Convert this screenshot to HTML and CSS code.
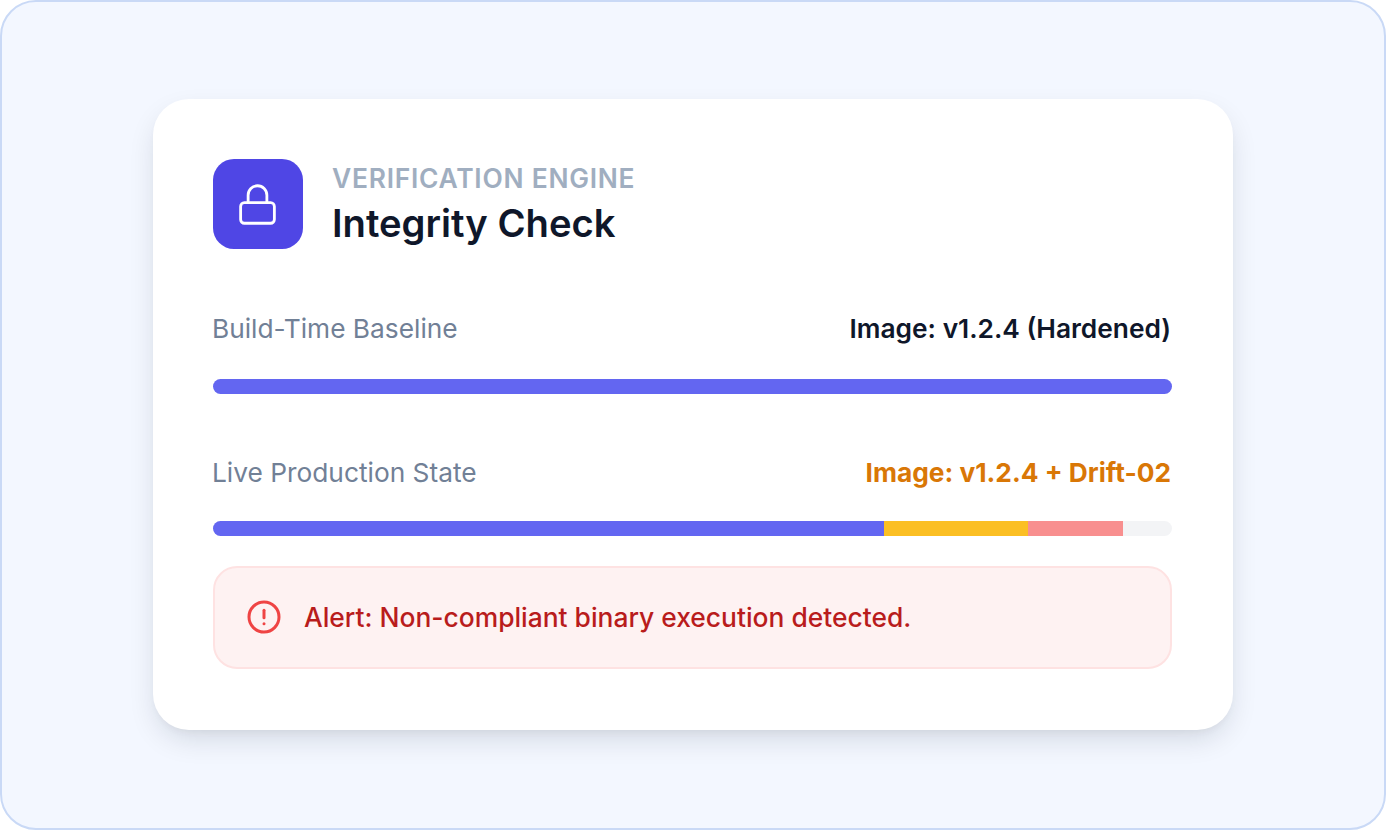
FILE: index.html
```html
<!DOCTYPE html>
<html lang="en">
<head>
<meta charset="utf-8">
<title>Integrity Check</title>
<link rel="stylesheet" href="styles.css">
</head>
<body>
<main class="frame">
  <section class="card">
    <header class="head">
      <div class="tile">
        <svg class="lock" viewBox="0 0 24 24" fill="none" stroke="#fff" stroke-width="1.5" stroke-linecap="round" stroke-linejoin="round">
          <rect x="3" y="11" width="18" height="11" rx="2"/>
          <path d="M7 11V7a5 5 0 0 1 10 0v4"/>
        </svg>
      </div>
      <div class="titles">
        <div class="eyebrow">VERIFICATION ENGINE</div>
        <h1 class="title">Integrity Check</h1>
      </div>
    </header>
    <div class="row row-first">
      <span class="label">Build-Time Baseline</span>
      <span class="value">Image: v1.2.4 (Hardened)</span>
    </div>
    <div class="bar bar-first"><div class="seg seg-indigo" style="width:100%"></div></div>
    <div class="row row-second">
      <span class="label">Live Production State</span>
      <span class="value value-warn">Image: v1.2.4 + Drift-02</span>
    </div>
    <div class="bar bar-second">
      <div class="seg seg-indigo" style="width:70%"></div>
      <div class="seg seg-amber" style="width:15%"></div>
      <div class="seg seg-red" style="width:9.9%"></div>
    </div>
    <div class="alert">
      <svg class="alert-icon" viewBox="0 0 24 24" fill="none" stroke="#ef4444" stroke-width="2" stroke-linecap="round" stroke-linejoin="round">
        <circle cx="12" cy="12" r="10"/>
        <path d="M12 7.5v5"/>
        <path d="M12 16.5h.01"/>
      </svg>
      <span class="alert-text">Alert: Non-compliant binary execution detected.</span>
    </div>
  </section>
</main>
</body>
</html>
```
FILE: styles.css
```css
* { box-sizing: border-box; }
html, body { margin: 0; padding: 0; }
body {
  width: 1386px;
  height: 830px;
  overflow: hidden;
  background: #fff;
  font-family: Inter, "Liberation Sans", sans-serif;
}
.frame {
  width: 1386px;
  height: 830px;
  display: flex;
  align-items: center;
  justify-content: center;
  background: #f3f7ff;
  border: 2px solid #c9d9f6;
  border-radius: 36px;
}
.card {
  width: 1080px;
  height: 631px;
  margin-top: -2px;
  padding: 60px 61px 0 60px;
  background: #fff;
  border-radius: 36px;
  box-shadow: 0 12px 30px -6px rgba(15, 23, 42, 0.16), 0 4px 10px -4px rgba(15, 23, 42, 0.06);
}
.head {
  display: flex;
  align-items: center;
  gap: 29px;
}
.tile {
  width: 90px;
  height: 90px;
  flex: none;
  display: flex;
  align-items: center;
  justify-content: center;
  background: #4f46e5;
  border-radius: 21px;
}
.lock { width: 45px; height: 45px; margin: 2px 0 0 -2px; }
.titles { display: flex; flex-direction: column; }
.eyebrow {
  margin-top: 1px;
  font-size: 26.4px;
  line-height: 36px;
  font-weight: 600;
  letter-spacing: 0.75px;
  color: #a0aec0;
}
.title {
  margin: 1px 0 0;
  font-size: 38.2px;
  line-height: 52px;
  font-weight: 600;
  color: #0f172a;
}
.row {
  display: flex;
  justify-content: space-between;
  align-items: center;
  padding-right: 1px;
  height: 36px;
  font-size: 26.3px;
}
.row-first { margin-top: 62px; }
.row-second { margin-top: 61px; }
.label { color: #718096; margin-left: -1px; }
.value { font-weight: 600; color: #0f172a; }
.value-warn { color: #d97706; font-weight: 700; }
.bar {
  display: flex;
  height: 15px;
  background: #f3f4f6;
  border-radius: 8px;
  overflow: hidden;
}
.bar-first { margin-top: 32px; }
.bar-second { margin-top: 30px; }
.seg { height: 100%; }
.seg-indigo { background: #6366f1; }
.seg-amber { background: #fbbf24; }
.seg-red { background: #f88f8f; }
.alert {
  display: flex;
  align-items: center;
  gap: 22px;
  height: 103px;
  margin-top: 30px;
  padding: 0 31px;
  background: #fef2f2;
  border: 2px solid #fee2e2;
  border-radius: 24px;
}
.alert-icon { width: 36px; height: 36px; flex: none; }
.alert-text { font-size: 26.4px; font-weight: 500; color: #b91c1c; }
```
